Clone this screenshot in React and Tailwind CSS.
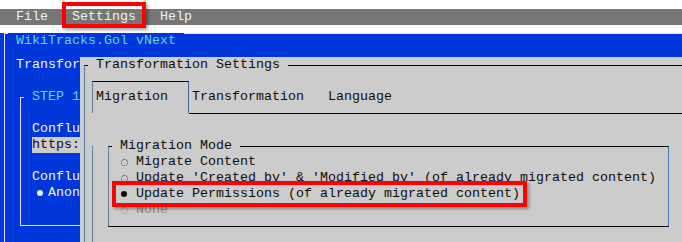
export default function App() {
  const radios = [
    { label: 'Migrate Content', checked: false },
    { label: "Update 'Created by' & 'Modified by' (of already migrated content)", checked: false },
    { label: 'Update Permissions (of already migrated content)', checked: true },
    { label: 'None', checked: false, faded: true },
  ]

  return (
    <div className="relative w-[682px] h-[242px] overflow-hidden bg-white pt-[9px] font-['Liberation_Mono',monospace] text-[13.333px] leading-4">
      {/* menu bar */}
      <div className="h-4 bg-[#767676] text-[#f2f2f2] whitespace-pre">{'  File   Settings   Help'}</div>

      {/* main window, mostly hidden behind the dialog */}
      <div className="relative h-[217px] bg-[#0037da]">
        <span className="absolute left-2 top-0 px-2 bg-[#0037da] text-[#61d6d6] whitespace-pre">WikiTracks.Gol vNext</span>
        <div className="mt-2 ml-1 h-[209px] border-l border-t border-[#e6e0ee]">
          <div className="mt-[23px] pl-[11px] h-4 text-[#f2f2f2] whitespace-pre">Transfor</div>
          <div className="relative mt-[24px] ml-[15px] w-[120px] h-[129px] border-l border-t border-b border-[#e6dcf0]">
            <span className="absolute -top-[9px] left-[3px] px-2 bg-[#0037da] text-[#61d6d6] whitespace-pre">STEP 1</span>
            <div className="mt-[23px] pl-[11px] h-4 text-[#f2f2f2] whitespace-pre">Conflu</div>
            <div className="ml-[11px] w-[48px] h-4 bg-[#cccccc] text-[#0c0c0c] whitespace-pre">https:</div>
            <div className="mt-4 pl-[11px] h-4 text-[#f2f2f2] whitespace-pre">Conflu</div>
            <div className="flex pl-[11px] h-4 text-[#f2f2f2] whitespace-pre">
              <span className="w-4 h-4 shrink-0 flex items-center justify-center">
                <span className="w-[6px] h-[6px] rounded-full bg-[#f2f2f2]" />
              </span>
              <span>Anon</span>
            </div>
          </div>
        </div>
      </div>

      {/* dialog */}
      <div className="absolute left-[80px] top-[57px] w-[602px] h-[185px] bg-[#cccccc] text-[#0c0c0c]">
        <span className="absolute left-2 top-0 px-2 bg-[#cccccc] whitespace-pre">Transformation Settings</span>
        <div className="mt-2 ml-1 h-[177px] border-t border-t-black border-l border-l-[#5f7d9e]">
          {/* tab headers */}
          <div className="flex mt-[15px] ml-[7px]">
            <div className="w-[97px] h-[32px] border-t border-t-black border-l border-l-[#5f7d9e] border-r border-r-[#3a6aa0] pl-[3px] pt-[7px] whitespace-pre">Migration</div>
            <div className="flex-1 h-[33px] border-b border-black pl-[3px] pt-[8px] whitespace-pre">{'Transformation   Language'}</div>
          </div>
          {/* tab body */}
          <div className="ml-[7px] h-[96px] border-l border-[#5f7d9e]">
            <div className="relative mt-[32px] ml-[15px] w-[561px] h-[81px] border-t border-b border-black border-l border-l-[#5f7d9e] border-r border-r-[#3a7cc4]">
              <span className="absolute -top-[9px] left-[3px] px-2 bg-[#cccccc] whitespace-pre">Migration Mode</span>
              <div className="mt-[7px] pl-[11px]">
                {radios.map(r => (
                  <div key={r.label} className={`flex h-4 whitespace-pre ${r.faded ? 'text-[#8a8a8a]' : ''}`}>
                    <span className="w-4 h-4 flex items-center justify-start pl-[1px]">
                      {r.checked ? (
                        <span className="w-[6px] h-[6px] rounded-full bg-[#0c0c0c]" />
                      ) : (
                        <span className={`w-[7px] h-[7px] rounded-full border border-dotted ${r.faded ? 'border-[#9a9a9a]' : 'border-[#444]'}`} />
                      )}
                    </span>
                    <span>{r.label}</span>
                  </div>
                ))}
              </div>
            </div>
          </div>
        </div>
      </div>

      {/* annotation boxes */}
      <div className="absolute left-[62px] top-[2px] w-[84px] h-[26px] border-4 border-[#ff0000] shadow-[2px_2px_3px_rgba(0,0,0,0.35)]" />
      <div className="absolute left-[112px] top-[181px] w-[415px] h-[26px] border-4 border-[#ff0000] shadow-[2px_2px_3px_rgba(0,0,0,0.35)]" />
    </div>
  )
}
